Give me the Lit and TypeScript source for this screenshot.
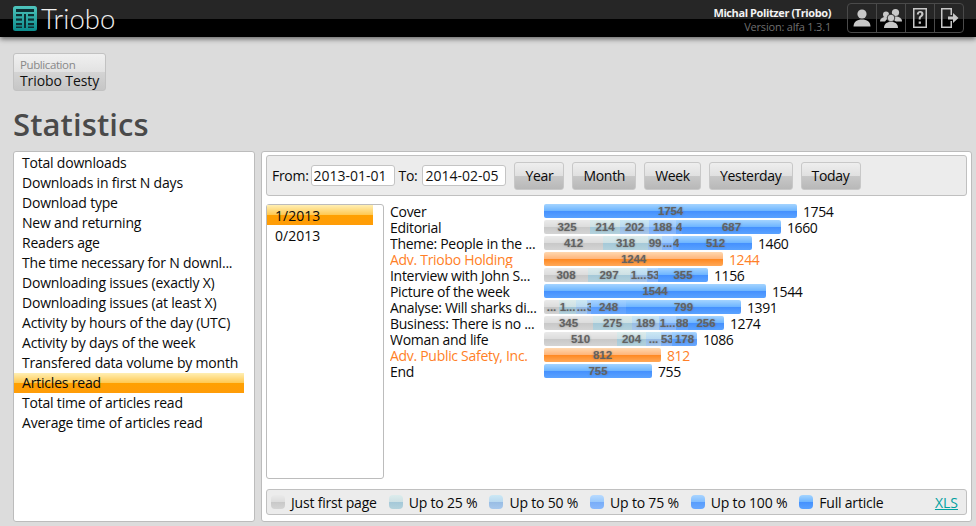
import { LitElement, html, css, svg } from "lit";
import { customElement } from "lit/decorators.js";

type Seg = [string, number, number];
interface Row { label: string; total: string; adv?: boolean; segs: Seg[] }

const rows: Row[] = [
  { label: "Cover", total: "1754", segs: [["1754", 5, 253]] },
  { label: "Editorial", total: "1660", segs: [["325", 0, 46], ["214", 1, 30], ["202", 2, 29], ["188", 3, 27], ["4", 4, 6], ["687", 5, 99]] },
  { label: "Theme: People in the ...", total: "1460", segs: [["412", 0, 59], ["318", 1, 45], ["99", 2, 14], ["...", 3, 11], ["4", 4, 6], ["512", 5, 73]] },
  { label: "Adv. Triobo Holding", total: "1244", adv: true, segs: [["1244", 6, 179]] },
  { label: "Interview with John S...", total: "1156", segs: [["308", 0, 44], ["297", 1, 42], ["1...", 2, 17], ["53", 3, 11], ["355", 5, 50]] },
  { label: "Picture of the week", total: "1544", segs: [["1544", 5, 222]] },
  { label: "Analyse: Will sharks di...", total: "1391", segs: [["...", 0, 15], ["1...", 1, 17], ["...", 2, 11], ["3", 3, 4], ["248", 4, 35], ["799", 5, 115]] },
  { label: "Business: There is no ...", total: "1274", segs: [["345", 0, 49], ["275", 1, 39], ["189", 2, 27], ["1...", 3, 17], ["88", 4, 12], ["256", 5, 36]] },
  { label: "Woman and life", total: "1086", segs: [["510", 0, 73], ["204", 1, 29], ["...", 2, 15], ["53", 3, 11], ["178", 4, 25]] },
  { label: "Adv. Public Safety, Inc.", total: "812", adv: true, segs: [["812", 6, 117]] },
  { label: "End", total: "755", segs: [["755", 5, 108]] },
];

const menu = [
  "Total downloads", "Downloads in first N days", "Download type", "New and returning", "Readers age",
  "The time necessary for N downl...", "Downloading issues (exactly X)", "Downloading issues (at least X)",
  "Activity by hours of the day (UTC)", "Activity by days of the week", "Transfered data volume by month",
  "Articles read", "Total time of articles read", "Average time of articles read",
];

const legend = ["Just first page", "Up to 25 %", "Up to 50 %", "Up to 75 %", "Up to 100 %", "Full article"];

@customElement("app-root")
export class AppRoot extends LitElement {
  static styles = css`
    :host { display: block; width: 976px; height: 526px; overflow: hidden; background: #dcdcdc; color: #0a0a0a;
      font-family: "Open Sans", "Noto Sans", sans-serif; font-size: 14px; }
    * { box-sizing: border-box; }
    header { height: 37px; display: flex; align-items: flex-start; background: linear-gradient(#262626 0 19px, #000 19px);
      box-shadow: 0 2px 5px rgba(0,0,0,.55); padding: 6px 12px 0 13px; position: relative; }
    .logo { width: 24px; height: 25px; display: block; }
    .brand { font-family: Lato, sans-serif; font-weight: 300; font-size: 27.5px; line-height: 25px; color: #f0f0f0; margin-left: 4px; }
    .user { margin-left: auto; text-align: right; padding: 0 16px 0 0; }
    .name { font-size: 11px; font-weight: 700; color: #f2f2f2; line-height: 13px; letter-spacing: -.4px; }
    .ver { font-size: 11px; color: #6f6f6f; line-height: 14px; margin-top: 1px; letter-spacing: -.2px; }
    .tools { display: flex; margin-top: -3px; width: 117px; height: 30px; border: 1px solid #4a4a4a; border-radius: 4px; }
    .tools div { flex: 1; display: flex; align-items: center; justify-content: center; border-left: 1px solid #4a4a4a; }
    .tools div:first-child { border-left: 0; }
    .tools svg { width: 24px; height: 24px; fill: #c8c8c8; }
    main { padding: 16px 4px 0 13px; }
    .pub { width: 93px; height: 38px; border: 1px solid #c2c2c2; border-radius: 3px; padding-left: 6px;
      background: linear-gradient(#f0f0f0, #e2e2e2 50%, #d4d4d4 50%, #c6c6c6); }
    .pub small { display: block; font-size: 11.5px; color: #888; line-height: 17px; margin-top: 2px; letter-spacing: -.4px; }
    .pub b { display: block; font-weight: 400; font-size: 14px; line-height: 15px; color: #111; letter-spacing: -.1px; white-space: nowrap; }
    h1 { margin: 15px 0 0; font-size: 31px; line-height: 37px; font-weight: 600; color: #4a4a4a; height: 45px; letter-spacing: .1px; }
    .cols { display: flex; gap: 6px; height: 371px; }
    .side { width: 242px; background: #fff; border: 1px solid #bcbcbc; border-radius: 3px; padding: 1px 10px 0 0; }
    .item { height: 20px; line-height: 20px; padding-left: 8px; white-space: nowrap; letter-spacing: -.2px; }
    .sel { background: linear-gradient(#ffefb4, #ffc850 50%, #ffa000 50%, #ff9c08); }
    .panel { flex: 1; background: #fff; border: 1px solid #bcbcbc; border-radius: 3px; padding: 3px 4px; display: flex; flex-direction: column; }
    .bar { height: 41px; background: #ececec; border: 1px solid #c0c0c0; border-radius: 3px; display: flex; align-items: center; padding: 0 5px; }
    .bar label { letter-spacing: -.3px; }
    .bar label.to { margin: 0 3px 0 4px; }
    .bar input { width: 84px; height: 21px; border: 1px solid #c4c4c4; border-radius: 3px; margin: 0 0 0 2px; padding: 0 0 0 2px; font: inherit; color: #111; background: #fff; }
    .btn { height: 28px; line-height: 26px; margin-left: 8px; padding: 0 10px; border: 1px solid #c8c8c8; border-radius: 3px; letter-spacing: -.3px; white-space: nowrap;
      background: linear-gradient(#eee, #e0e0e0 50%, #c8c8c8 50%, #b8b8b8); }
    .mid { flex: 1; display: flex; margin-top: 8px; min-height: 0; }
    .months { width: 118px; height: 275px; border: 1px solid #bcbcbc; border-radius: 3px; padding: 0 10px 0 0; }
    .months div { height: 20px; line-height: 21px; padding-left: 8px; }
    .chart { margin-left: 6px; }
    .row { height: 16px; display: flex; align-items: flex-start; line-height: 16px; }
    .lab { width: 154px; white-space: nowrap; letter-spacing: -.3px; overflow: hidden; }
    .stack { display: flex; height: 14px; border-radius: 2px; overflow: hidden; }
    .seg { overflow: hidden; text-align: center; white-space: nowrap; font: 700 11.5px/14px "Liberation Sans", sans-serif; letter-spacing: -.1px; color: #626262; text-shadow: 0 0 2px rgba(90,90,90,.5); }
    .s0 { background: linear-gradient(#eaeaea, #dcdcdc 50%, #c8c8c8 50%, #d4d4d4); }
    .s1 { background: linear-gradient(#dcecec, #cde0e4 50%, #a4c8d8 50%, #b4d2dc); }
    .s2 { background: linear-gradient(#cce8f4, #b8d8f0 50%, #98bce4 50%, #a8c8ec); }
    .s3 { background: linear-gradient(#b8daff, #98c8fc 50%, #78acf8 50%, #88b8fc); }
    .s4 { background: linear-gradient(#a8d4ff, #80bcff 50%, #589cfc 50%, #68a8ff); }
    .s5 { background: linear-gradient(#a4d4ff, #6cb4ff 50%, #4490fe 50%, #5aa2ff); }
    .s6 { background: linear-gradient(#ffd8b0, #ffb478 50%, #ff8820 50%, #ffa858); }
    .val { margin-left: 6px; letter-spacing: -.4px; }
    .adv { color: #ff7f27; }
    .foot { height: 26px; background: #ececec; border: 1px solid #c0c0c0; border-radius: 3px; display: flex; align-items: center; padding: 0 8px 0 4px; margin-bottom: 3px; }
    .leg { display: flex; align-items: center; letter-spacing: -.2px; margin-right: 12px; white-space: nowrap; }
    .sw { width: 14px; height: 14px; border-radius: 4px; margin-right: 6px; }
    .xls { margin-left: auto; color: #00a0a0; text-decoration: underline; }
  `;

  private logo() {
    return svg`<svg class="logo" viewBox="0 0 24 25">
      <defs><linearGradient id="lg" x1="0" y1="0" x2="0" y2="1"><stop offset="0" stop-color="#4fc4bc"/><stop offset="1" stop-color="#0a8c8c"/></linearGradient></defs>
      <rect width="24" height="25" rx="2.5" fill="url(#lg)"/>
      <g fill="#0f2f33">
        <rect x="3" y="3" width="18" height="3"/>
        <rect x="3" y="8" width="6" height="2.2"/><rect x="11" y="8" width="2" height="14"/><rect x="15" y="8" width="6" height="2.2"/>
        <rect x="3" y="12.5" width="6" height="2.2"/><rect x="15" y="12.5" width="6" height="2.2"/>
        <rect x="3" y="17" width="6" height="2.2"/><rect x="15" y="17" width="6" height="2.2"/>
        <rect x="3" y="20.5" width="6" height="1.5"/><rect x="15" y="20.5" width="6" height="1.5"/>
      </g></svg>`;
  }

  render() {
    return html`
      <header>
        ${this.logo()}
        <div class="brand">Triobo</div>
        <div class="user">
          <div class="name">Michal Politzer (Triobo)</div>
          <div class="ver">Version: alfa 1.3.1</div>
        </div>
        <div class="tools">
          <div><svg viewBox="0 0 24 24"><circle cx="12" cy="8" r="4.6"/><path d="M3.5 20.5c0-4.5 3.5-7 8.5-7s8.500 2.500 8.500 7z"/></svg></div>
          <div><svg viewBox="0 0 24 24"><circle cx="16.500" cy="6.500" r="3.600"/><path d="M12 12.500c1-1.500 2.800-2 4.500-2 3.500 0 6.500 1.500 6.500 5h-6z"/><circle cx="7" cy="8.500" r="3"/><path d="M1 15.500c0-3 2.500-4.500 5.500-4.500 1 0 2 .2 2.800.600L6 15.500z"/><circle cx="12" cy="12" r="3.800" stroke="#1a1a1a" stroke-width=".8"/><path d="M5 22c0-4 3-6.200 7-6.200s7 2.200 7 6.200z"/></svg></div>
          <div><svg viewBox="0 0 24 24"><path fill-rule="evenodd" d="M5 2h14v20H5zM6.500 3.500v17h11v-17z"/><path d="M8.800 8.500c0-2.200 1.400-3.500 3.400-3.500s3.300 1.200 3.300 3c0 1.600-.9 2.300-1.800 3-.7.5-1 .9-1 1.800v.7h-2v-1c0-1.300.5-2 1.400-2.700.8-.6 1.200-1 1.200-1.700 0-.8-.5-1.300-1.200-1.300-.8 0-1.300.6-1.300 1.700zM10.700 15.500h2.200v2.300h-2.200z"/></svg></div>
          <div><svg viewBox="0 0 24 24"><path fill-rule="evenodd" d="M4 2h11v7h-1.500V3.500h-8v17h8V15H15v7H4z"/><path d="M11 10.500h5V7l5.500 5-5.500 5v-3.500h-5z"/></svg></div>
        </div>
      </header>
      <main>
        <div class="pub"><small>Publication</small><b>Triobo Testy</b></div>
        <h1>Statistics</h1>
        <div class="cols">
          <nav class="side">
            ${menu.map((m) => html`<div class="item ${m === "Articles read" ? "sel" : ""}">${m}</div>`)}
          </nav>
          <section class="panel">
            <div class="bar">
              <label>From:</label><input value="2013-01-01" />
              <label class="to">To:</label><input value="2014-02-05" />
              ${["Year", "Month", "Week", "Yesterday", "Today"].map((b) => html`<div class="btn">${b}</div>`)}
            </div>
            <div class="mid">
              <div class="months"><div class="sel">1/2013</div><div>0/2013</div></div>
              <div class="chart">
                ${rows.map((r) => html`<div class="row">
                  <div class="lab ${r.adv ? "adv" : ""}">${r.label}</div>
                  <div class="stack">${r.segs.map((s) => html`<div class="seg s${s[1]}" style="width:${s[2]}px">${s[0]}</div>`)}</div>
                  <div class="val ${r.adv ? "adv" : ""}">${r.total}</div>
                </div>`)}
              </div>
            </div>
            <div class="foot">
              ${legend.map((l, i) => html`<div class="leg"><span class="sw s${i}"></span>${l}</div>`)}
              <a class="xls">XLS</a>
            </div>
          </section>
        </div>
      </main>`;
  }
}
